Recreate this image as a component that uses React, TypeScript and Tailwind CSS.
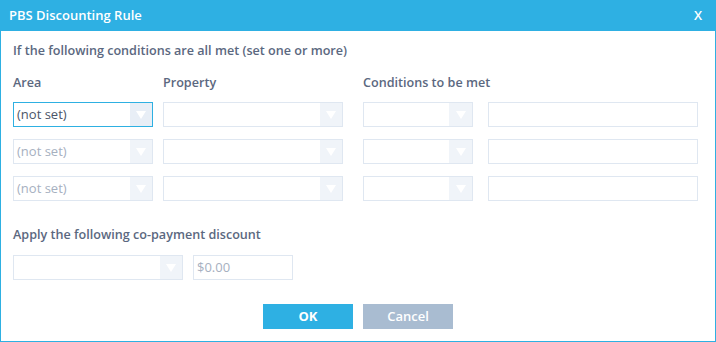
import React from "react";

const font = { fontFamily: '"Open Sans", "Noto Sans", sans-serif' };

function Arrow() {
  return (
    <svg width="10" height="8" viewBox="0 0 10 8">
      <polygon points="0,0 10,0 5,8" fill="#ffffff" />
    </svg>
  );
}

function Select({
  w,
  text,
  focused,
  dim,
  btn = 23,
}: {
  w: string;
  text?: string;
  focused?: boolean;
  dim?: boolean;
  btn?: number;
}) {
  return (
    <div
      className={`${w} h-[25px] flex border ${
        focused ? "border-[#2eb0e2]" : "border-[#dfe7f1]"
      } bg-white`}
    >
      <div
        className={`flex-1 flex items-center pl-[3px] text-[13px] ${
          dim ? "text-[#a6b0bf]" : "text-[#4b5568]"
        }`}
      >
        {text}
      </div>
      <div
        className={`${btn === 24 ? "w-[23px]" : "w-[22px]"} h-full flex items-center justify-center ${
          focused ? "bg-[#e8eef6]" : "bg-[#f0f4f9]"
        }`}
      >
        <Arrow />
      </div>
    </div>
  );
}

function Input({ w, text }: { w: string; text?: string }) {
  return (
    <div className={`${w} h-[25px] border border-[#dfe7f1] bg-white flex items-center pl-[3px] text-[13px] text-[#a6b0bf]`}>
      {text}
    </div>
  );
}

export default function App() {
  const rows = [
    { text: "(not set)", focused: true, dim: false },
    { text: "(not set)", focused: false, dim: true },
    { text: "(not set)", focused: false, dim: true },
  ];
  return (
    <div style={font} className="w-[716px] h-[342px] bg-white flex flex-col border-x border-b border-[#2eb0e2] box-border">
      <div className="h-[31px] shrink-0 bg-[#2eb0e3] flex items-center justify-between pl-[9px] pr-[14px] -mx-px">
        <span className="text-white text-[13px] font-semibold">PBS Discounting Rule</span>
        <span className="text-white text-[13px] font-semibold">X</span>
      </div>
      <div className="flex-1 flex flex-col pl-[12px] pr-[17px]">
        <div className="mt-[12px] h-[16px] leading-[16px] text-[12.6px] font-semibold text-[#5b6880]">
          If the following conditions are all met (set one or more)
        </div>
        <div className="mt-[16px] h-[16px] leading-[16px] flex text-[12.6px] font-semibold text-[#5b6880]">
          <div className="w-[150px]">Area</div>
          <div className="w-[200px]">Property</div>
          <div>Conditions to be met</div>
        </div>
        <div className="mt-[11px] flex flex-col gap-[12px]">
          {rows.map((r, i) => (
            <div key={i} className="flex">
              <Select w="w-[140px]" text={r.text} focused={r.focused} dim={r.dim} />
              <div className="w-[10px]" />
              <Select w="w-[180px]" />
              <div className="w-[20px]" />
              <Select w="w-[110px]" btn={24} />
              <div className="w-[15px]" />
              <Input w="w-[210px]" />
            </div>
          ))}
        </div>
        <div className="mt-[26px] h-[16px] leading-[16px] text-[12.6px] font-semibold text-[#5b6880]">
          Apply the following co-payment discount
        </div>
        <div className="mt-[12px] flex gap-[10px]">
          <Select w="w-[170px]" />
          <Input w="w-[100px]" text="$0.00" />
        </div>
        <div className="mt-[24px] flex justify-center gap-[10px] pl-[5px]">
          <div className="w-[90px] h-[25px] bg-[#2eb0e3] text-white text-[13px] font-bold flex items-center justify-center">
            OK
          </div>
          <div className="w-[90px] h-[25px] bg-[#a9bcd1] text-white text-[13px] font-semibold flex items-center justify-center">
            Cancel
          </div>
        </div>
      </div>
    </div>
  );
}
